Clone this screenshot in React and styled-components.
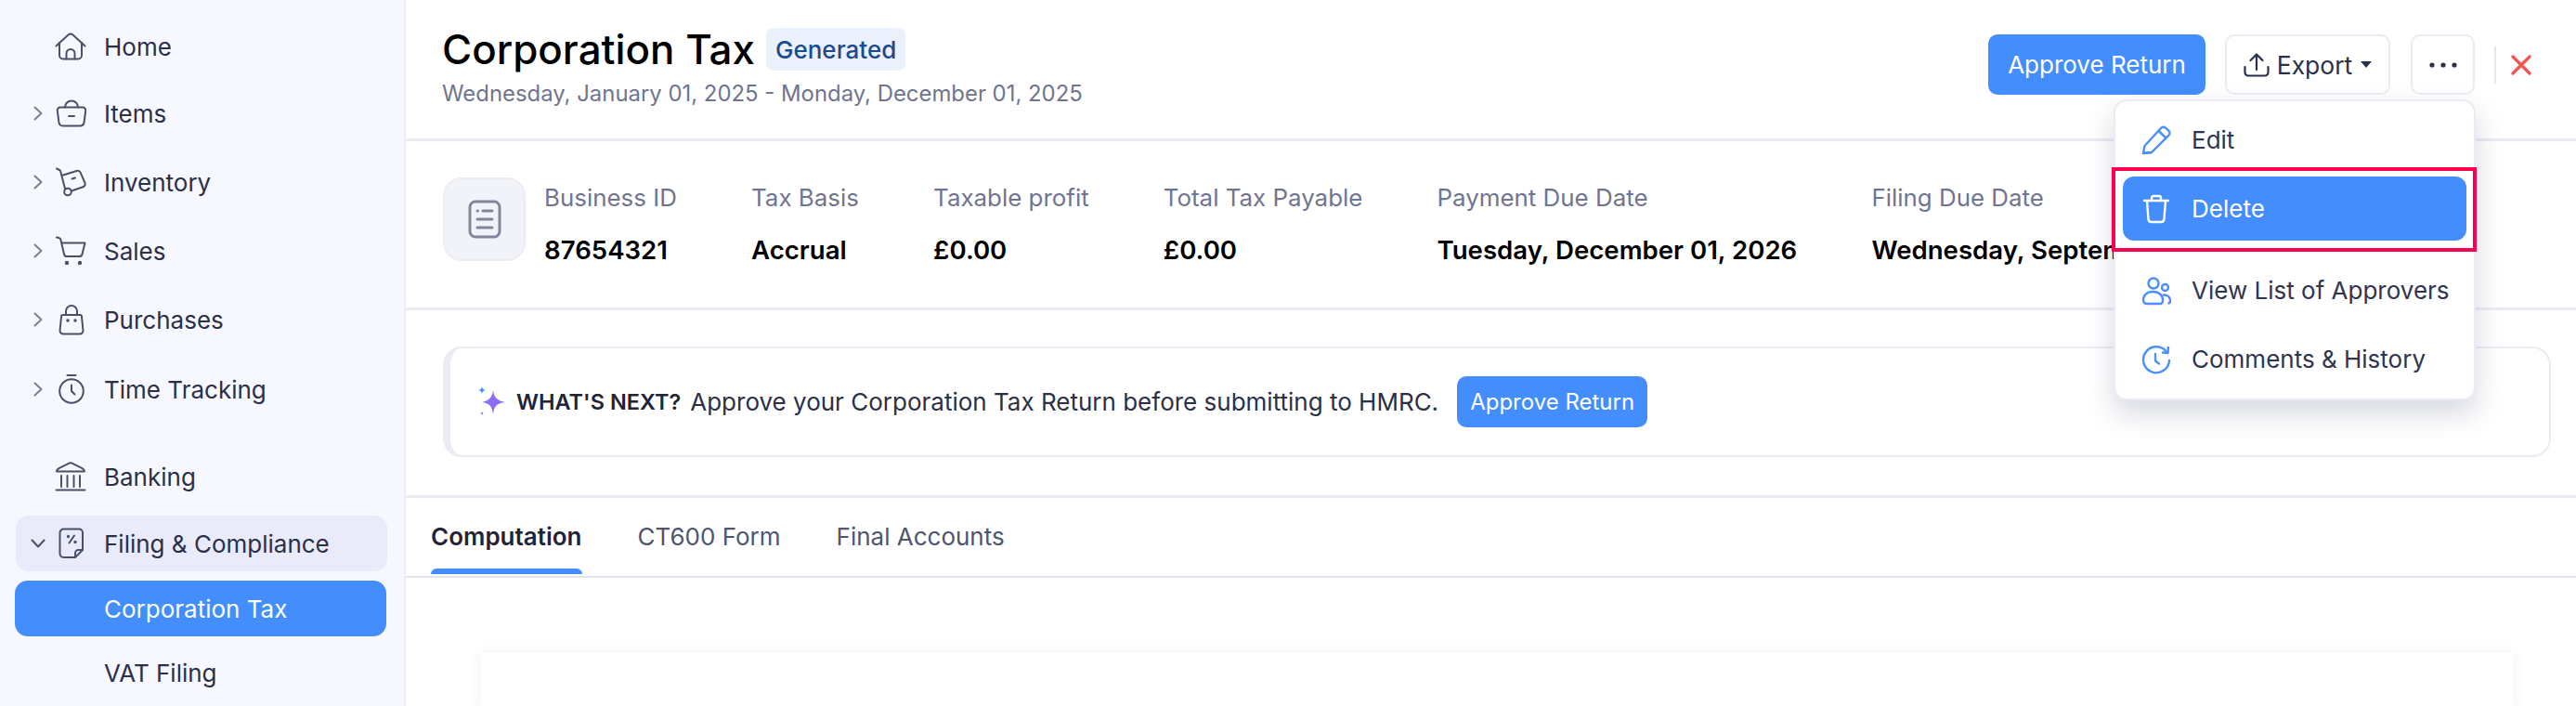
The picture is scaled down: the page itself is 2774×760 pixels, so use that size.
import React from 'react'
import styled, { createGlobalStyle } from 'styled-components'

const GlobalStyle = createGlobalStyle`
  html, body {
    margin: 0;
    padding: 0;
    background: #fff;
    overflow: hidden;
  }
  * {
    box-sizing: border-box;
  }
`

const Page = styled.div`
  display: flex;
  width: 2774px;
  height: 760px;
  overflow: hidden;
  font-family: Inter, "Liberation Sans", sans-serif;
  color: #000;
`

const Sidebar = styled.aside`
  flex: 0 0 437px;
  padding: 20px 0 0 17px;
  background: #f7f8ff;
  border-right: 2px solid #ebecf8;
  display: flex;
  flex-direction: column;
`

const NavRow = styled.div`
  display: flex;
  align-items: center;
  flex: 0 0 ${p => p.$height || 60}px;
  width: 400px;
  margin-top: ${p => p.$top || 0}px;
  border-radius: 14px;
  background: ${p => (p.$open ? '#e9eafa' : 'transparent')};
  font-size: 26px;
  color: #2a3048;
`

const SubRow = styled(NavRow)`
  margin-left: -1px;
  padding-left: 96px;
  background: ${p => (p.$active ? '#438efc' : 'transparent')};
  color: ${p => (p.$active ? '#fff' : '#2a3048')};
`

const ChevronSlot = styled.span`
  flex: 0 0 42px;
  display: flex;
  justify-content: center;
  align-items: center;
  padding-left: 6px;
`

const IconSlot = styled.span`
  flex: 0 0 34px;
  height: 34px;
  margin-right: 19px;
  display: flex;
`

const Main = styled.main`
  position: relative;
  flex: 1;
  min-width: 0;
  display: flex;
  flex-direction: column;
`

const Header = styled.header`
  flex: 0 0 152px;
  display: flex;
  justify-content: space-between;
  padding: 30px 48px 0 39px;
  border-bottom: 3px solid #ebecf3;
`

const TitleLine = styled.div`
  display: flex;
  align-items: center;
  gap: 12px;
`

const Title = styled.h1`
  margin: 0;
  font-size: 43.900px;
  line-height: 46px;
  font-weight: 500;
  color: #000;
`

const Badge = styled.span`
  display: flex;
  align-items: center;
  height: 46px;
  padding: 0 10px;
  border-radius: 8px;
  background: #eaf1fd;
  color: #1c4a8e;
  font-size: 26px;
  font-weight: 500;
`

const DateRange = styled.div`
  margin-top: 11px;
  font-size: 23.900px;
  line-height: 28px;
  color: #6f7590;
`

const Actions = styled.div`
  display: flex;
  align-items: center;
  height: 65px;
  margin-top: 7px;
`

const PrimaryButton = styled.button`
  width: ${p => p.$width}px;
  height: ${p => p.$height}px;
  padding: 0;
  border: 0;
  border-radius: 10px;
  background: #438efc;
  color: #fff;
  font-family: inherit;
  font-size: ${p => p.$size}px;
  font-weight: 400;
`

const OutlineButton = styled.button`
  display: flex;
  align-items: center;
  justify-content: center;
  width: ${p => p.$width}px;
  height: 65px;
  margin-left: ${p => p.$left}px;
  padding: 0;
  border: 2px solid #ebecf3;
  border-radius: 10px;
  background: #fff;
  color: #2a3048;
  font-family: inherit;
  font-size: 26.500px;
`

const ExportLabel = styled.span`
  margin-left: 8px;
`

const Caret = styled.span`
  width: 0;
  height: 0;
  margin-left: 9px;
  border-left: 6.500px solid transparent;
  border-right: 6.500px solid transparent;
  border-top: 7px solid #2a3048;
`

const Divider = styled.span`
  width: 2px;
  height: 40px;
  margin: 0 16px 0 21px;
  background: #e6e7ee;
`

const Stats = styled.section`
  flex: 0 0 182px;
  display: flex;
  padding: 39px 0 0 40px;
  border-bottom: 3px solid #ebecf3;
  overflow: hidden;
  white-space: nowrap;
`

const StatIcon = styled.div`
  flex: 0 0 89px;
  height: 90px;
  margin-right: 20px;
  display: flex;
  align-items: center;
  justify-content: center;
  border: 2px solid #ecedf4;
  border-radius: 20px;
  background: #f2f3f9;
`

const StatList = styled.div`
  display: flex;
  gap: 80.200px;
`

const Stat = styled.div`
  display: flex;
  flex-direction: column;
`

const StatLabel = styled.span`
  margin-top: 7px;
  font-size: 25.900px;
  line-height: 30px;
  color: #6f7590;
`

const StatValue = styled.span`
  margin-top: 25px;
  font-size: 27.600px;
  line-height: 32px;
  font-weight: 600;
  color: #000;
`

const BannerWrap = styled.section`
  flex: 0 0 199px;
  padding: 39px 27px 41px 40px;
  border-bottom: 3px solid #ebecf3;
`

const Banner = styled.div`
  height: 119px;
  display: flex;
  align-items: center;
  padding-left: 29px;
  border: 2px solid #ebecf3;
  border-left-width: 8px;
  border-radius: 20px;
  font-size: 26px;
  color: #2a3048;
`

const Spark = styled.svg`
  flex: 0 0 32px;
`

const BannerHead = styled.strong`
  margin: 0 10px;
  font-weight: 600;
  font-size: 23.500px;
  color: #1f2438;
`

const BannerButton = styled(PrimaryButton)`
  margin-left: 20px;
`

const Tabs = styled.nav`
  flex: 0 0 86px;
  display: flex;
  padding-left: 27px;
  border-bottom: 2px solid #e3e5ec;
`

const Tab = styled.div`
  position: relative;
  display: flex;
  align-items: center;
  height: 82px;
  margin-right: 60px;
  font-size: 26px;
  font-weight: ${p => (p.$active ? 600 : 400)};
  color: ${p => (p.$active ? '#1f2438' : '#4f556e')};

  &::after {
    content: '';
    display: ${p => (p.$active ? 'block' : 'none')};
    position: absolute;
    left: 0;
    right: 0;
    bottom: 0;
    height: 6px;
    border-radius: 6px 6px 0 0;
    background: #438efc;
  }
`

const Content = styled.div`
  flex: 1;
  padding: 80px 67px 0 80px;
`

const Sheet = styled.div`
  height: 100%;
  background: #fff;
  box-shadow: 0 0 10px rgba(60, 66, 110, 0.09);
`

const Menu = styled.div`
  position: absolute;
  top: 107px;
  left: 1839px;
  width: 390px;
  padding: 7px 8px 8px;
  display: flex;
  flex-direction: column;
  border: 2px solid #ebecf3;
  border-radius: 14px;
  background: #fff;
  box-shadow: 0 14px 30px rgba(70, 76, 120, 0.22);
`

const MenuItem = styled.div`
  position: relative;
  display: flex;
  align-items: center;
  height: 69px;
  margin-top: ${p => p.$top || 0}px;
  padding-left: 20px;
  border-radius: 12px;
  background: ${p => (p.$active ? '#438efc' : 'transparent')};
  color: ${p => (p.$active ? '#fff' : '#2f3550')};
  font-size: 26px;
  white-space: nowrap;

  &::after {
    content: '';
    display: ${p => (p.$active ? 'block' : 'none')};
    position: absolute;
    inset: -10px -11px -12px -12px;
    border: 4px solid #ff0050;
  }
`

const MenuIcon = styled.span`
  flex: 0 0 32px;
  height: 32px;
  margin-right: 22px;
  display: flex;
`

const Glyph = ({ size = 34, width, height, color = '#4a506a', stroke = 2, children }) => (
  <svg
    width={width || size}
    height={height || size}
    viewBox={`0 0 ${width || size} ${height || size}`}
    fill="none"
    stroke={color}
    strokeWidth={stroke}
    strokeLinecap="round"
    strokeLinejoin="round"
  >
    {children}
  </svg>
)

const ChevronRight = () => (
  <Glyph width={10} height={16} color="#7c7f92" stroke={2}>
    <path d="M1.5 1.5 8.5 8l-7 6.5" />
  </Glyph>
)

const ChevronDown = () => (
  <Glyph width={16} height={10} color="#4a506a" stroke={2}>
    <path d="M1.5 1.5 8 8.5l6.5-7" />
  </Glyph>
)

const navIcons = {
  home: (
    <>
      <path d="M1.5 16.5 14.5 4.5a3.5 3.5 0 0 1 5 0l13 12" />
      <path d="M5 13v13.5a4 4 0 0 0 4 4h16a4 4 0 0 0 4-4V13" />
      <path d="M12.5 30.5v-6a4.5 4.5 0 0 1 9 0v6" />
    </>
  ),
  items: (
    <>
      <path d="M6 10.5h24a3.2 3.2 0 0 1 3.2 3.6l-1.6 12.4a4.5 4.5 0 0 1-4.4 4H8.800a4.500 4.500 0 0 1-4.400-4L2.800 14.100A3.200 3.200 0 0 1 6 10.500z" />
      <path d="M11 10.500a7 7 0 0 1 14 0" />
      <path d="M15 20h6" />
    </>
  ),
  inventory: (
    <>
      <path d="M2 2.500l3 1.500a2 2 0 0 1 1.200 1.400L11 24" />
      <circle cx="14" cy="27.500" r="3.800" />
      <path d="M9 9.500 23.500 5a3.500 3.500 0 0 1 4.200 1.800l4.800 11a3.500 3.500 0 0 1-2.200 4.500L18 26.500" />
      <path d="M18.500 13.500l3.500-1" />
    </>
  ),
  sales: (
    <>
      <path d="M2 2.500l2.800.8a2 2 0 0 1 1.500 1.500L10 20.500a3 3 0 0 0 3 2.500h13.500a3 3 0 0 0 3-2.500L32.500 8.500H8" />
      <circle cx="13" cy="30" r="1.200" fill="#4a506a" />
      <circle cx="27" cy="30" r="1.200" fill="#4a506a" />
    </>
  ),
  purchases: (
    <>
      <path d="M9 12h18a2 2 0 0 1 2 2l1.500 15a3.500 3.500 0 0 1-3.500 3.500H9A3.500 3.500 0 0 1 5.500 29L7 14a2 2 0 0 1 2-2z" />
      <path d="M12 12V8a6 6 0 0 1 12 0v4" />
      <circle cx="14" cy="18" r="0.800" fill="#4a506a" />
      <circle cx="22" cy="18" r="0.800" fill="#4a506a" />
    </>
  ),
  time: (
    <>
      <circle cx="18" cy="19" r="12.800" />
      <path d="M13.500 2h9" />
      <path d="M18 12.500V19l3.500 3.500" />
    </>
  ),
  banking: (
    <>
      <path d="M2 11.500c0-1.500 1-2.500 2.500-3.300L15 2.800a4.500 4.500 0 0 1 4 0l10.500 5.400c1.500.8 2.500 1.800 2.500 3.300z" />
      <path d="M7 16v12M13.500 16v12M20.500 16v12M27 16v12" />
      <path d="M1.500 31.500h31" />
    </>
  ),
  filing: (
    <>
      <path d="M9.500 1.500H26a4 4 0 0 1 4 4V24l-8 8H9.500a4 4 0 0 1-4-4V5.500a4 4 0 0 1 4-4z" />
      <path d="M30 24h-4.500a3.500 3.500 0 0 0-3.500 3.500V32" />
      <path d="M21 8.500l-5.500 8" />
      <circle cx="14.500" cy="9.500" r="0.700" fill="#4a506a" />
      <circle cx="22" cy="15.500" r="0.700" fill="#4a506a" />
    </>
  ),
}

const NavIcon = ({ name }) => (
  <IconSlot>
    <Glyph>{navIcons[name]}</Glyph>
  </IconSlot>
)

const navTop = [
  ['home', 'Home', false, 0],
  ['items', 'Items', true, 12],
  ['inventory', 'Inventory', true, 14],
  ['sales', 'Sales', true, 14],
  ['purchases', 'Purchases', true, 14],
  ['time', 'Time Tracking', true, 15],
  ['banking', 'Banking', false, 34],
]

const stats = [
  ['Business ID', '87654321'],
  ['Tax Basis', 'Accrual'],
  ['Taxable profit', '£0.00'],
  ['Total Tax Payable', '£0.00'],
  ['Payment Due Date', 'Tuesday, December 01, 2026'],
  ['Filing Due Date', 'Wednesday, September 01, 2026'],
]

const BLUE = '#4a8ffb'

export default function App() {
  return (
    <Page>
      <GlobalStyle />
      <Sidebar>
        {navTop.map(([icon, label, expandable, top]) => (
          <NavRow key={label} $top={top}>
            <ChevronSlot>{expandable && <ChevronRight />}</ChevronSlot>
            <NavIcon name={icon} />
            {label}
          </NavRow>
        ))}
        <NavRow $top={12} $open>
          <ChevronSlot>
            <ChevronDown />
          </ChevronSlot>
          <NavIcon name="filing" />
          Filing &amp; Compliance
        </NavRow>
        <SubRow $top={10} $active>Corporation Tax</SubRow>
        <SubRow $top={9}>VAT Filing</SubRow>
      </Sidebar>

      <Main>
        <Header>
          <div>
            <TitleLine>
              <Title>Corporation Tax</Title>
              <Badge>Generated</Badge>
            </TitleLine>
            <DateRange>Wednesday, January 01, 2025 - Monday, December 01, 2025</DateRange>
          </div>
          <Actions>
            <PrimaryButton $width={234} $height={65} $size={26}>Approve Return</PrimaryButton>
            <OutlineButton $width={178} $left={21}>
              <Glyph width={28} height={26} color="#2a3048" stroke={2.2}>
                <path d="M14 18V2M7.500 8 14 1.500 20.500 8" />
                <path d="M1.500 15v6a3.500 3.500 0 0 0 3.500 3.500h18a3.500 3.500 0 0 0 3.500-3.500v-6" />
              </Glyph>
              <ExportLabel>Export</ExportLabel>
              <Caret />
            </OutlineButton>
            <OutlineButton $width={69} $left={22}>
              <svg width="30" height="6" viewBox="0 0 30 6" fill="#2a3048">
                <circle cx="3" cy="3" r="2.600" />
                <circle cx="15" cy="3" r="2.600" />
                <circle cx="27" cy="3" r="2.600" />
              </svg>
            </OutlineButton>
            <Divider />
            <Glyph width={22} height={22} color="#f55252" stroke={3.2}>
              <path d="M2 2l18 18M20 2 2 20" />
            </Glyph>
          </Actions>
        </Header>

        <Stats>
          <StatIcon>
            <Glyph width={36} height={42} color="#83859a" stroke={3}>
              <rect x="2" y="2" width="32" height="38" rx="6" />
              <path d="M10 12h.5M16 12h10M10 21h16M10 30h16" />
            </Glyph>
          </StatIcon>
          <StatList>
            {stats.map(([label, value]) => (
              <Stat key={label}>
                <StatLabel>{label}</StatLabel>
                <StatValue>{value}</StatValue>
              </Stat>
            ))}
          </StatList>
        </Stats>

        <BannerWrap>
          <Banner>
            <Spark width="32" height="34" viewBox="0 0 32 34">
              <path d="M17 4c1 8 4 11 13 13-9 1-12 4-13 13-1-9-4-12-12-13 8-2 11-5 12-13z" fill="#8b6cf6" />
              <path d="M5 0c.4 2.500 1.200 3.300 4 4-2.800.7-3.600 1.500-4 4-.4-2.500-1.200-3.300-4-4 2.800-.7 3.600-1.500 4-4z" fill="#438efc" />
              <path d="M5 27c.2 1.200.7 1.700 2 2-1.300.3-1.800.8-2 2-.2-1.200-.7-1.700-2-2 1.300-.3 1.800-.8 2-2z" fill="#8b6cf6" />
            </Spark>
            <BannerHead>WHAT'S NEXT?</BannerHead>
            Approve your Corporation Tax Return before submitting to HMRC.
            <BannerButton $width={205} $height={55} $size={24}>Approve Return</BannerButton>
          </Banner>
        </BannerWrap>

        <Tabs>
          <Tab $active>Computation</Tab>
          <Tab>CT600 Form</Tab>
          <Tab>Final Accounts</Tab>
        </Tabs>

        <Content>
          <Sheet />
        </Content>

        <Menu>
          <MenuItem>
            <MenuIcon>
              <Glyph size={32} color={BLUE} stroke={2.400}>
                <path d="M2 30l1.500-8L21 3a3.500 3.500 0 0 1 5-.3l3.300 3a3.500 3.500 0 0 1 .2 5L11 29z" />
                <path d="M2 30l9-1" />
                <path d="M18.500 6l8 7.500" />
              </Glyph>
            </MenuIcon>
            Edit
          </MenuItem>
          <MenuItem $top={5} $active>
            <MenuIcon>
              <Glyph size={32} color="#fff" stroke={2.400}>
                <path d="M3 7h26" />
                <path d="M11 7V4a2 2 0 0 1 2-2h6a2 2 0 0 1 2 2v3" />
                <path d="M6 7l1.500 20a3.500 3.500 0 0 0 3.500 3h10a3.500 3.500 0 0 0 3.500-3L26 7" />
              </Glyph>
            </MenuIcon>
            Delete
          </MenuItem>
          <MenuItem $top={19}>
            <MenuIcon>
              <Glyph size={32} color={BLUE} stroke={2.400}>
                <circle cx="13" cy="8" r="5.500" />
                <circle cx="25.500" cy="12.500" r="3.500" />
                <path d="M21 30H6a4 4 0 0 1-4-4c0-5 4-9 10-9s11 3 11 9a4 4 0 0 1-2 4z" />
                <path d="M24 20.500c4 0 7 2.500 7 6a3 3 0 0 1-1.500 3" />
              </Glyph>
            </MenuIcon>
            View List of Approvers
          </MenuItem>
          <MenuItem $top={5}>
            <MenuIcon>
              <Glyph size={32} color={BLUE} stroke={2.400}>
                <path d="M28 9a14 14 0 1 0 2 8" />
                <path d="M23 8.500l5.500.5.500-6" />
                <path d="M15 10v7.500l4 3" />
              </Glyph>
            </MenuIcon>
            Comments &amp; History
          </MenuItem>
        </Menu>
      </Main>
    </Page>
  )
}
